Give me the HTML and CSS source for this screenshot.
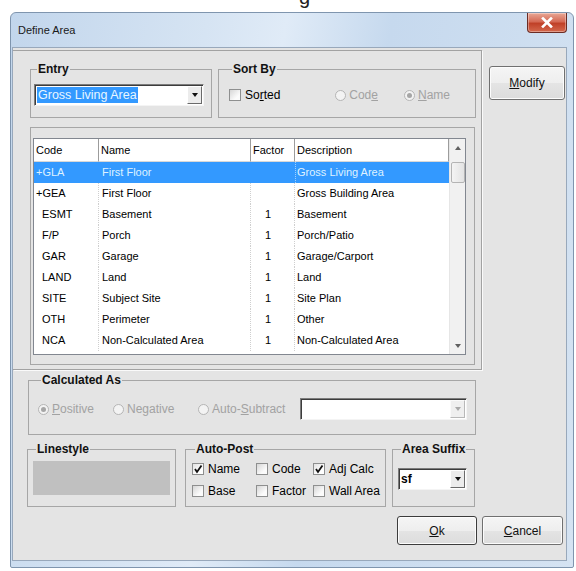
FILE: index.html
```html
<!DOCTYPE html>
<html lang="en">
<head>
<meta charset="utf-8">
<title>Define Area</title>
<link rel="stylesheet" href="styles.css">
</head>
<body>
<div class="caption"><span>g</span></div>
<div class="window">
  <div class="titlebar">
    <span class="title">Define Area</span>
    <button class="close" aria-label="Close">
      <svg width="12" height="11" viewBox="0 0 12 11"><path d="M2 1.5 L10 9.5 M10 1.5 L2 9.5" stroke="#fff" stroke-width="2.6" stroke-linecap="square"/></svg>
    </button>
  </div>
  <div class="client">
    <div class="top-row">
      <div class="panel">
        <div class="head-row">
          <fieldset class="grp entry">
            <legend>Entry</legend>
            <div class="combo entry-combo">
              <span class="val"><span class="hl">Gross Living Area</span></span>
              <span class="drop"><i class="tri"></i></span>
            </div>
          </fieldset>
          <fieldset class="grp sortby">
            <legend>Sort By</legend>
            <div class="sort-line">
              <span class="chk"><span class="box"></span><span>So<u>r</u>ted</span></span>
              <span class="sort-radios">
                <span class="radio dis"><span class="dot"></span><span>Cod<u>e</u></span></span>
                <span class="radio dis on"><span class="dot"></span><span><u>N</u>ame</span></span>
              </span>
            </div>
          </fieldset>
        </div>
        <fieldset class="grp listgrp">
          <div class="list">
            <div class="rows">
              <div class="hc">Code</div><div class="hc">Name</div><div class="hc">Factor</div><div class="hc">Description</div>

              <div class="c code sel">+GLA</div><div class="c name sel">First Floor</div><div class="c fac sel"></div><div class="c desc sel">Gross Living Area</div>
              <div class="c code">+GEA</div><div class="c name">First Floor</div><div class="c fac"></div><div class="c desc">Gross Building Area</div>
              <div class="c code ind">ESMT</div><div class="c name">Basement</div><div class="c fac">1</div><div class="c desc">Basement</div>
              <div class="c code ind">F/P</div><div class="c name">Porch</div><div class="c fac">1</div><div class="c desc">Porch/Patio</div>
              <div class="c code ind">GAR</div><div class="c name">Garage</div><div class="c fac">1</div><div class="c desc">Garage/Carport</div>
              <div class="c code ind">LAND</div><div class="c name">Land</div><div class="c fac">1</div><div class="c desc">Land</div>
              <div class="c code ind">SITE</div><div class="c name">Subject Site</div><div class="c fac">1</div><div class="c desc">Site Plan</div>
              <div class="c code ind">OTH</div><div class="c name">Perimeter</div><div class="c fac">1</div><div class="c desc">Other</div>
              <div class="c code ind">NCA</div><div class="c name">Non-Calculated Area</div><div class="c fac">1</div><div class="c desc">Non-Calculated Area</div>
            </div>
            <div class="vscroll">
              <span class="arrow"><i class="up"></i></span>
              <span class="thumb"></span>
              <span class="track"></span>
              <span class="arrow"><i class="down"></i></span>
            </div>
          </div>
        </fieldset>
      </div>
      <div class="side">
        <button class="btn modify"><u>M</u>odify</button>
      </div>
    </div>

    <fieldset class="grp calc">
      <legend>Calculated As</legend>
      <div class="calc-line">
        <span class="radio dis on r1"><span class="dot"></span><span><u>P</u>ositive</span></span>
        <span class="radio dis r2"><span class="dot"></span><span>Negative</span></span>
        <span class="radio dis r3"><span class="dot"></span><span>Auto-<u>S</u>ubtract</span></span>
        <div class="combo calc-combo">
          <span class="val"></span>
          <span class="drop off"><i class="tri"></i></span>
        </div>
      </div>
    </fieldset>

    <div class="bottom">
      <fieldset class="grp linestyle">
        <legend>Linestyle</legend>
        <div class="swatch"></div>
      </fieldset>
      <fieldset class="grp autopost">
        <legend>Auto-Post</legend>
        <div class="post-grid">
          <span class="chk"><span class="box on"><svg width="10" height="10" viewBox="0 0 10 10"><path d="M2 5 L4 8 L8.5 1.5" fill="none" stroke="#111" stroke-width="1.8"/></svg></span><span>Name</span></span>
          <span class="chk"><span class="box"></span><span>Code</span></span>
          <span class="chk"><span class="box on"><svg width="10" height="10" viewBox="0 0 10 10"><path d="M2 5 L4 8 L8.5 1.5" fill="none" stroke="#111" stroke-width="1.8"/></svg></span><span>Adj Calc</span></span>
          <span class="chk"><span class="box"></span><span>Base</span></span>
          <span class="chk"><span class="box"></span><span>Factor</span></span>
          <span class="chk"><span class="box"></span><span>Wall Area</span></span>
        </div>
      </fieldset>
      <fieldset class="grp suffix">
        <legend>Area Suffix</legend>
        <div class="combo suffix-combo">
          <span class="val strong">sf</span>
          <span class="drop"><i class="tri"></i></span>
        </div>
      </fieldset>
    </div>

    <div class="actions">
      <button class="btn ok"><u>O</u>k</button>
      <button class="btn cancel"><u>C</u>ancel</button>
    </div>
  </div>
</div>
</body>
</html>
```

FILE: styles.css
```css
* { box-sizing: border-box; }

body {
  margin: 0;
  background: #fff;
  font-family: "Liberation Sans", Arial, sans-serif;
  font-size: 12px;
  color: #000;
}

/* tail of the caption line above the dialog */
.caption {
  height: 12px;
  overflow: hidden;
}
.caption span {
  display: block;
  margin: -15px 0 0 299px;
  font-size: 20px;
  line-height: 24px;
  color: #222;
}

/* dialog frame */
.window {
  width: 564px;
  height: 556px;
  margin-left: 10px;
  border: 1px solid #7f95ae;
  border-radius: 6px 6px 2px 2px;
  background: linear-gradient(100deg, #c2d6ec 0%, #d6e4f3 30%, #e0ebf7 42%, #c6d9ee 58%, #d5e3f2 100%);
  display: flex;
  flex-direction: column;
  overflow: hidden;
}

.titlebar {
  height: 34px;
  flex: none;
  display: flex;
  justify-content: space-between;
  align-items: flex-start;
}
.title {
  margin: 11px 0 0 7px;
  font-size: 11px;
  line-height: 13px;
  color: #1a1a1a;
}
.close {
  width: 40px;
  height: 20px;
  margin-right: 6px;
  padding: 0;
  border: 1px solid #6b2c24;
  border-top: none;
  border-radius: 0 0 4px 4px;
  background: linear-gradient(#e9a896 0%, #d56a55 45%, #c04128 55%, #d4684d 100%);
  box-shadow: inset 0 0 0 1px rgba(255, 255, 255, 0.35);
  display: flex;
  align-items: center;
  justify-content: center;
}

/* client area */
.client {
  flex: 1;
  margin: 0 6px 6px 1px;
  border: 1px solid #98a8bb;
  background: #e4e4e4;
  display: flex;
  flex-direction: column;
}

.top-row {
  display: flex;
  align-items: flex-start;
}

.panel {
  width: 469px;
  height: 320px;
  margin-top: 2px;
  border: 1px solid #a2a2a2;
  border-left: none;
  box-shadow: 1px 1px 0 #fafafa;
}

.head-row {
  display: flex;
  margin: 11px 0 0 17px;
}

/* group boxes */
fieldset.grp {
  margin: 0;
  padding: 0;
  min-width: 0;
  border: 1px solid #a6a6a6;
}
fieldset.grp legend {
  margin-left: 3px;
  padding: 0 1px;
  font-weight: bold;
  font-size: 12px;
  line-height: 14px;
  color: #111;
}

.entry {
  width: 182px;
  padding: 8px 0 11px 3px !important;
}
.sortby {
  width: 258px;
  margin-left: 6px !important;
  padding: 8px 0 11px 10px !important;
}

/* combo boxes */
.combo {
  height: 22px;
  background: #fff;
  border: 1px solid;
  border-color: #7c7c7c #f4f4f4 #f4f4f4 #7c7c7c;
  box-shadow: inset 1px 1px 0 #3c3c3c;
  display: flex;
  align-items: center;
}
.combo .val {
  flex: 1;
  padding-left: 2px;
  white-space: nowrap;
}
.combo .val.strong {
  font-weight: bold;
  font-size: 12px;
}
.hl {
  background: #3399ff;
  color: #e8f6ff;
  font-size: 12.5px;
  padding: 1px 1px;
}
.drop {
  width: 15px;
  height: 18px;
  margin-right: 1px;
  background: #ececec;
  border: 1px solid;
  border-color: #fff #6a6a6a #6a6a6a #fff;
  display: flex;
  align-items: center;
  justify-content: center;
}
.drop.off {
  background: #efefef;
  border-color: #fafafa #b8b8b8 #b8b8b8 #fafafa;
}
.tri {
  width: 0;
  height: 0;
  border-left: 3.5px solid transparent;
  border-right: 3.5px solid transparent;
  border-top: 4px solid #111;
}
.drop.off .tri { border-top-color: #a8a8a8; }

.entry-combo { width: 170px; }

/* sort row */
.sort-line {
  height: 22px;
  display: flex;
  align-items: center;
}
.sort-radios {
  margin-left: auto;
  margin-right: 25px;
  display: flex;
  gap: 26px;
}

/* check boxes and radio buttons */
.chk {
  display: inline-flex;
  align-items: center;
  gap: 4px;
  white-space: nowrap;
}
.box {
  width: 12px;
  height: 12px;
  border: 1px solid #8e8f8f;
  background: linear-gradient(135deg, #d6d6d6, #fbfbfb 70%);
  display: flex;
  align-items: center;
  justify-content: center;
}
.box.on { background: linear-gradient(135deg, #e2e2e2, #ffffff 70%); }

.radio {
  display: inline-flex;
  align-items: center;
  gap: 3px;
  white-space: nowrap;
}
.radio .dot {
  width: 11px;
  height: 11px;
  border-radius: 50%;
  border: 1px solid #b5b5b5;
  background: #f3f3f3;
  display: flex;
  align-items: center;
  justify-content: center;
}
.radio.on .dot::after {
  content: "";
  width: 5px;
  height: 5px;
  border-radius: 50%;
  background: #a6a6a6;
}
.radio.dis { color: #a2a2a2; }

/* list */
.listgrp {
  width: 445px;
  height: 238px;
  margin: 9px 0 0 17px !important;
  padding: 10px 8px 9px 2px !important;
}
.list {
  width: 433px;
  height: 217px;
  border: 1px solid #828790;
  background: #fff;
  display: flex;
}
.rows {
  width: 415px;
  display: grid;
  grid-template-columns: 65px 152px 44px 154px;
  grid-template-rows: 23px;
  grid-auto-rows: 21px;
  align-content: start;
  font-size: 11px;
}
.hc {
  padding-left: 2px;
  line-height: 22px;
  border-right: 1px solid #9c9c9c;
  border-bottom: 1px solid #d8d8d8;
  white-space: nowrap;
  overflow: hidden;
}
.c {
  line-height: 21px;
  white-space: nowrap;
  overflow: hidden;
  border-right: 1px dotted #cfcfcf;
}
.c.code { padding-left: 2px; }
.c.code.ind { padding-left: 8px; }
.c.name { padding-left: 3px; }
.c.fac { padding-left: 14px; }
.c.desc { padding-left: 2px; border-right: none; }
.c.sel {
  background: #3399ff;
  color: #dff2ff;
  border-right-color: #3399ff;
}
.c.desc.sel { border-left: 1px dotted #9fd0ff; padding-left: 1px; }

.vscroll {
  width: 16px;
  background: #f1f1f1;
  border-left: 1px solid #e6e6e6;
  display: flex;
  flex-direction: column;
  align-items: center;
}
.vscroll .arrow {
  height: 17px;
  width: 100%;
  display: flex;
  align-items: center;
  justify-content: center;
}
.vscroll .arrow:first-child { margin-bottom: 6px; }
.up, .down {
  width: 0;
  height: 0;
  border-left: 3px solid transparent;
  border-right: 3px solid transparent;
}
.up { border-bottom: 4px solid #606060; }
.down { border-top: 4px solid #606060; }
.thumb {
  width: 14px;
  height: 21px;
  border: 1px solid #b4b4b4;
  border-radius: 2px;
  background: linear-gradient(90deg, #f4f4f4, #e3e3e3);
}
.track { flex: 1; }

/* buttons */
.btn {
  padding: 0;
  font-family: inherit;
  font-size: 12px;
  color: #111;
  border: 1px solid #707070;
  border-radius: 3px;
  background: linear-gradient(#f5f5f5 0%, #eeeeee 50%, #e4e4e4 51%, #dcdcdc 100%);
  box-shadow: inset 0 0 0 1px #fcfcfc;
}
.side { margin: 18px 0 0 7px; }
.modify { width: 76px; height: 34px; }

/* calculated as */
.calc {
  width: 448px;
  margin: 3px 0 0 15px !important;
  padding: 11px 0 14px 9px !important;
}
.calc-line {
  height: 22px;
  display: flex;
  align-items: center;
}
.r1 { width: 75px; }
.r2 { width: 85px; }
.r3 { width: 102px; }
.calc-combo { width: 167px; }

/* bottom groups */
.bottom {
  display: flex;
  align-items: flex-start;
  margin: 7px 0 0 14px;
}
.linestyle {
  width: 149px;
  height: 65px;
  padding: 5px 0 0 5px !important;
}
.swatch {
  width: 137px;
  height: 34px;
  background: #c0c0c0;
}
.autopost {
  width: 201px;
  height: 65px;
  margin-left: 9px !important;
  padding: 4px 0 0 6px !important;
}
.post-grid {
  display: grid;
  grid-template-columns: 64px 57px auto;
  grid-auto-rows: 18px;
  row-gap: 4px;
  align-items: center;
}
.suffix {
  width: 83px;
  height: 65px;
  margin-left: 6px !important;
  padding: 12px 0 0 5px !important;
}
.suffix-combo { width: 69px; }

.actions {
  display: flex;
  justify-content: flex-end;
  gap: 5px;
  margin: 9px 3px 0 0;
}
.ok {
  width: 80px;
  height: 29px;
  border-color: #3c3c3c;
}
.cancel {
  width: 81px;
  height: 29px;
}
```
